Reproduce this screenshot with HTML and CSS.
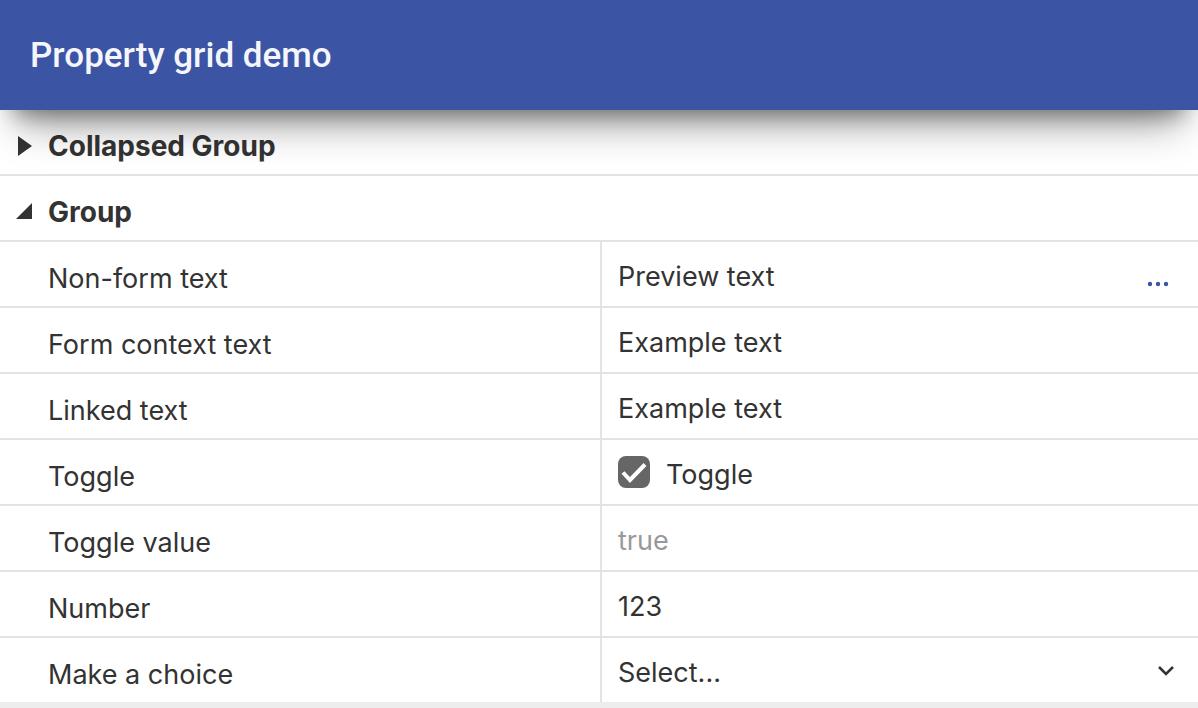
FILE: index.html
```html
<!DOCTYPE html>
<html lang="en">
<head>
<meta charset="utf-8">
<meta name="viewport" content="width=device-width, initial-scale=1">
<title>Property grid demo</title>
<link rel="stylesheet" href="styles.css">
</head>
<body>
<header class="toolbar">
  <h1 class="toolbar-title">Property grid demo</h1>
</header>
<main class="property-grid">
  <section class="group">
    <button class="group-header" type="button" aria-expanded="false">
      <svg class="arrow" viewBox="0 0 16 20" aria-hidden="true"><path d="M2 0L16 10L2 20Z"/></svg>
      <span>Collapsed Group</span>
    </button>
  </section>
  <section class="group">
    <button class="group-header" type="button" aria-expanded="true">
      <svg class="arrow" viewBox="0 0 16 20" aria-hidden="true"><path d="M0 17H16V1Z"/></svg>
      <span>Group</span>
    </button>
    <div class="row">
      <span class="name">Non-form text</span>
      <div class="value">
        <span class="preview">Preview text</span>
        <button class="more" type="button" aria-label="Edit non-form text">
          <svg class="dots" viewBox="0 0 22 4" aria-hidden="true"><circle cx="2" cy="2" r="2.2"/><circle cx="10" cy="2" r="2.2"/><circle cx="18" cy="2" r="2.2"/></svg>
        </button>
      </div>
    </div>
    <div class="row">
      <label class="name" for="form-text">Form context text</label>
      <div class="value"><input class="field" id="form-text" type="text" value="Example text"></div>
    </div>
    <div class="row">
      <label class="name" for="linked-text">Linked text</label>
      <div class="value"><input class="field" id="linked-text" type="text" value="Example text"></div>
    </div>
    <div class="row">
      <span class="name">Toggle</span>
      <div class="value">
        <input class="check" id="toggle" type="checkbox" checked>
        <svg class="tick" viewBox="0 0 32 32" aria-hidden="true"><path d="M5 16.500L12 24L27 8.500"/></svg>
        <label class="check-label" for="toggle">Toggle</label>
      </div>
    </div>
    <div class="row">
      <label class="name" for="toggle-value">Toggle value</label>
      <div class="value"><input class="field" id="toggle-value" type="text" value="true" disabled></div>
    </div>
    <div class="row">
      <label class="name" for="number">Number</label>
      <div class="value"><input class="field" id="number" type="number" value="123"></div>
    </div>
    <div class="row">
      <label class="name" for="choice">Make a choice</label>
      <div class="value">
        <select class="field" id="choice"><option>Select...</option></select>
        <svg class="chevron" viewBox="0 0 16 10" aria-hidden="true"><path d="M1 1L8 8L15 1"/></svg>
      </div>
    </div>
  </section>
</main>
</body>
</html>
```
FILE: styles.css
```css
* {
  box-sizing: border-box;
}

body {
  margin: 0;
  background: #ededed;
  color: #333;
  font-family: Inter, "Liberation Sans", sans-serif;
  font-size: 27px;
  line-height: 32px;
}

button,
input,
select {
  margin: 0;
  padding: 0;
  border: 0;
  background: none;
  color: inherit;
  font: inherit;
}

.toolbar {
  position: relative;
  display: flex;
  align-items: center;
  min-height: 110px;
  padding: 2px 30px 0;
  background: #3b54a4;
  color: #f5f6fc;
  box-shadow:
    0 18px 20px -14px rgba(0, 0, 0, 0.38),
    0 32px 40px -18px rgba(0, 0, 0, 0.38);
}

.toolbar-title {
  margin: 0;
  font-family: Roboto, Inter, sans-serif;
  font-size: 35px;
  font-weight: 500;
  line-height: 40px;
}

.property-grid {
  background: #fff;
}

.group-header {
  display: flex;
  align-items: center;
  gap: 16px;
  width: 100%;
  min-height: 66px;
  padding: 8px 16px 0;
  border-bottom: 2px solid #e3e3e3;
  font-size: 28px;
  font-weight: 700;
  text-align: left;
}

.arrow {
  width: 16px;
  height: 20px;
  fill: #333;
}

.row {
  display: grid;
  grid-template-columns: calc(50% + 1px) 1fr;
  min-height: 66px;
  border-bottom: 2px solid #e3e3e3;
}

.row:last-child {
  min-height: 64px;
  border-bottom: 0;
}

.name {
  display: flex;
  align-items: center;
  padding: 10px 16px 0 48px;
}

.value {
  position: relative;
  display: flex;
  align-items: center;
  min-width: 0;
  padding: 6px 16px 0;
  border-left: 2px solid #e3e3e3;
}

.preview,
.field {
  flex: 1;
  min-width: 0;
}

.field {
  height: 32px;
  appearance: none;
  outline: 0;
}

.field:disabled {
  color: #999;
  opacity: 1;
}

.field[type="number"] {
  appearance: textfield;
}

.field::-webkit-inner-spin-button {
  appearance: none;
}

.more {
  display: flex;
  align-items: center;
  padding: 14px 12px 0;
}

.dots {
  width: 22px;
  height: 4px;
  overflow: visible;
  fill: #3b54a4;
}

.check {
  width: 32px;
  height: 32px;
  margin: 0 16px 6px 0;
  appearance: none;
  border-radius: 8px;
  background: #666;
}

.tick {
  position: absolute;
  top: 16px;
  left: 16px;
  width: 32px;
  height: 32px;
  fill: none;
  stroke: #fff;
  stroke-width: 4;
  pointer-events: none;
}

.check:not(:checked) + .tick {
  display: none;
}

.chevron {
  position: absolute;
  top: 28px;
  right: 24px;
  width: 16px;
  height: 10px;
  fill: none;
  stroke: #333;
  stroke-width: 2.5;
  pointer-events: none;
}
```
